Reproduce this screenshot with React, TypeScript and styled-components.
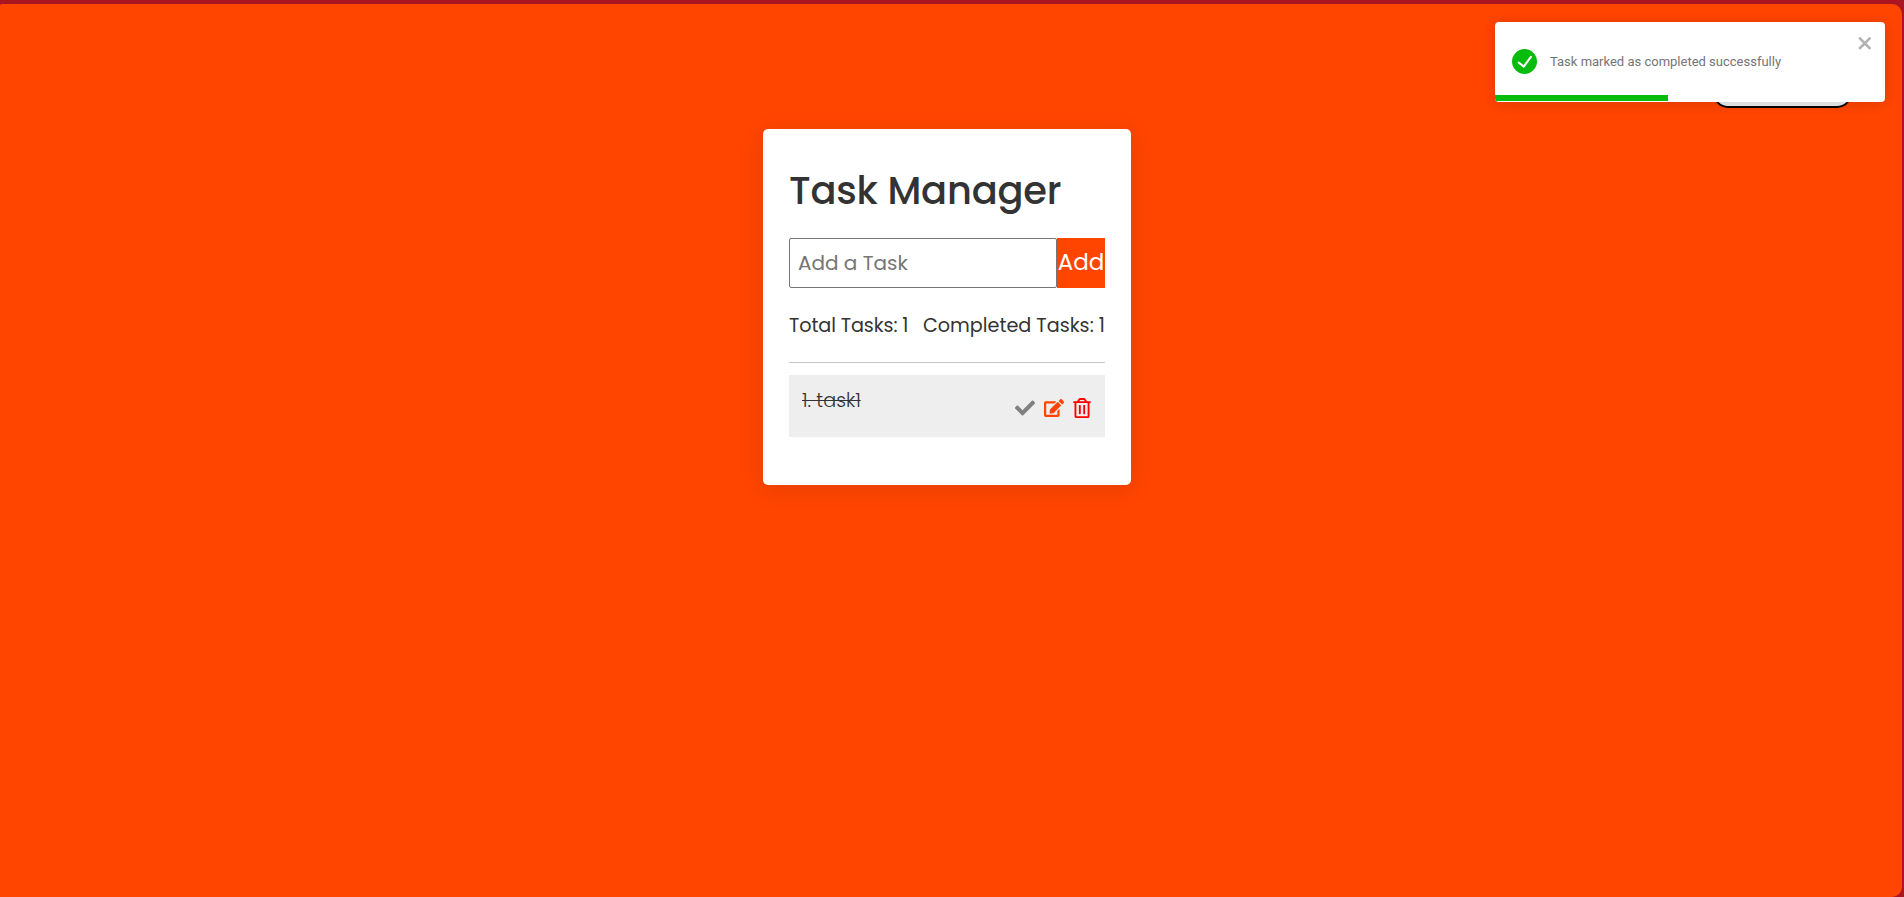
import React from "react";
import styled, { createGlobalStyle } from "styled-components";
import { FaCheck, FaEdit, FaRegTrashAlt } from "react-icons/fa";

const GlobalStyle = createGlobalStyle`
  *, *::before, *::after { box-sizing: border-box; }
  body {
    margin: 0;
    background: #a91622;
    font-family: Poppins, Inter, sans-serif;
    color: #333;
  }
`;

const Page = styled.main`
  height: 893px;
  margin: 4px 2px 0 0;
  padding-top: 125px;
  background: orangered;
  border-radius: 2px 10px 10px 0;
`;

const Card = styled.section`
  width: 368px;
  height: 356px;
  margin-left: 763px;
  padding: 37px 26px 0;
  background: #fff;
  border-radius: 5px;
  box-shadow: 0 4px 24px rgba(0, 0, 0, 0.1);
`;

const Title = styled.h1`
  margin: 0;
  height: 72px;
  font-size: 38.4px;
  line-height: 50px;
  font-weight: 500;
  letter-spacing: -0.2px;
  white-space: nowrap;
`;

const Form = styled.form`
  display: flex;
  height: 50px;
`;

const Field = styled.input`
  width: 268px;
  padding: 0 8px;
  border: 1px solid #767676;
  border-radius: 2px;
  background: #fff;
  font: inherit;
  font-size: 20px;
  outline: none;
  &::placeholder { color: #757575; opacity: 1; }
`;

const AddButton = styled.button`
  width: 48px;
  padding: 0 0 2px;
  border: 0;
  background: orangered;
  color: #fff;
  font: inherit;
  font-size: 23px;
`;

const Stats = styled.div`
  display: flex;
  justify-content: space-between;
  margin-top: 20px;
  height: 54px;
  font-size: 19.2px;
  line-height: 35px;
  white-space: nowrap;
`;

const Stat = styled.span<{ $tracking?: number }>`
  letter-spacing: ${({ $tracking = 0 }) => $tracking}px;
`;

const Divider = styled.hr`
  margin: 0 0 12px;
  border: 0;
  border-top: 1px solid #c8c8c8;
`;

const Task = styled.div`
  display: flex;
  justify-content: space-between;
  align-items: flex-start;
  height: 62px;
  padding: 9px 13px;
  background: #eee;
`;

const TaskName = styled.span`
  font-size: 19.2px;
  line-height: 33px;
  font-weight: 300;
  text-decoration: line-through;
  text-decoration-thickness: 1px;
`;

const Actions = styled.div`
  display: flex;
  gap: 8.5px;
  padding-top: 14px;
`;

const Action = styled.span<{ $color: string }>`
  display: flex;
  color: ${({ $color }) => $color};
  font-size: 20px;
`;

const LogoutButton = styled.button`
  position: absolute;
  top: 64px;
  left: 1713px;
  width: 139px;
  height: 44px;
  border: 2px solid #000;
  border-radius: 15px;
  background: #efefef;
`;

const Toast = styled.div`
  position: absolute;
  top: 22px;
  left: 1495px;
  width: 390px;
  height: 80px;
  display: flex;
  align-items: center;
  padding: 0 14px 0 17px;
  background: #fff;
  border-radius: 4px;
  overflow: hidden;
  box-shadow: 0 1px 13px rgba(0, 0, 0, 0.1), 0 2px 15px rgba(0, 0, 0, 0.05);
`;

const StatusIcon = styled.svg`
  margin-bottom: 1px;
`;

const Message = styled.span`
  flex: 1;
  margin: 0 0 2px 13px;
  color: #757575;
  font-family: Roboto, sans-serif;
  font-size: 13px;
  white-space: nowrap;
`;

const Close = styled.svg`
  align-self: flex-start;
  margin: 11px -3px 0 0;
`;

const Progress = styled.div`
  position: absolute;
  left: 0;
  bottom: 1px;
  width: 173px;
  height: 6px;
  background: #07bc0c;
`;

export default function App() {
  return (
    <>
      <GlobalStyle />
      <Page>
        <Card>
          <Title>Task Manager</Title>
          <Form>
            <Field placeholder="Add a Task" />
            <AddButton type="button">Add</AddButton>
          </Form>
          <Stats>
            <Stat $tracking={-0.12}>Total Tasks: 1</Stat>
            <Stat>Completed Tasks: 1</Stat>
          </Stats>
          <Divider />
          <Task>
            <TaskName>1. task1</TaskName>
            <Actions>
              <Action $color="gray"><FaCheck /></Action>
              <Action $color="orangered"><FaEdit /></Action>
              <Action $color="red"><FaRegTrashAlt /></Action>
            </Actions>
          </Task>
        </Card>
      </Page>
      <LogoutButton type="button" aria-label="Account" />
      <Toast role="alert">
        <StatusIcon width="25" height="25" viewBox="0 0 24 24" fill="#07bc0c">
          <path d="M12 0a12 12 0 1012 12A12.014 12.014 0 0012 0zm6.927 8.2l-6.845 9.289a1.011 1.011 0 01-1.43.188l-4.888-3.908a1 1 0 111.25-1.562l4.076 3.261 6.227-8.451a1 1 0 111.61 1.183z" />
        </StatusIcon>
        <Message>Task marked as completed successfully</Message>
        <Close width="17.5" height="20" viewBox="0 0 14 16" fill="#b2b2b2">
          <path fillRule="evenodd" d="M7.71 8.23l3.75 3.75-1.48 1.48-3.75-3.75-3.75 3.75L1 11.98l3.75-3.75L1 4.48 2.48 3l3.75 3.75L9.98 3l1.48 1.48-3.75 3.75z" />
        </Close>
        <Progress />
      </Toast>
    </>
  );
}
